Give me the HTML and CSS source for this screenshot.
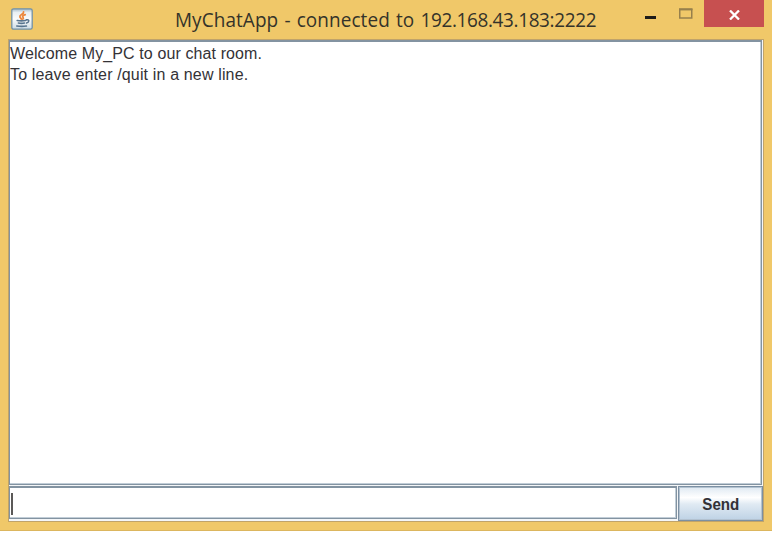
FILE: index.html
```html
<!DOCTYPE html>
<html lang="en">
<head>
<meta charset="utf-8">
<title>MyChatApp</title>
<link rel="stylesheet" href="styles.css">
</head>
<body>
<main class="window">
  <header class="titlebar">
    <svg class="app-icon" width="22" height="22" viewBox="0 0 22 22">
      <defs><linearGradient id="tile" x1="0" y1="0" x2="0" y2="1"><stop offset="0" stop-color="#a5bac8"/><stop offset=".18" stop-color="#e8eff3"/><stop offset=".5" stop-color="#fafbfa"/><stop offset="1" stop-color="#cbdbe5"/></linearGradient></defs>
      <rect x=".8" y=".8" width="20.4" height="20.4" rx="1.8" fill="url(#tile)" stroke="#7291a5" stroke-width="1.3"/>
      <g fill="none" stroke-linecap="round">
        <path d="M12.6 3.8c.4 2.6-4.5 3-3.7 5.1.3.9 1.3 1.3 1.4 2.3M14.2 6.7c-2.8 1-3 1.8-2.1 2.8.5.7.2 1.2-.3 1.6" stroke="#ec873b" stroke-width="1.8"/>
        <path d="M6.2 12.5c2 .4 6.3.4 8.2 0M7.4 15c2 .5 4.2.5 6 0M15.4 11.9c3.2-.8 3.1 2.4.2 3.1M5.8 18c3 .4 7 .4 9.6 0" stroke="#57748e" stroke-width="1.6"/>
      </g>
    </svg>
    <h1 class="title">MyChatApp - connected to <span class="address">192.168.43.183:2222</span></h1>
    <div class="controls">
      <svg class="minimize" width="12" height="3"><path d="M0 0h11v3H0z" fill="#1d1c19"/></svg>
      <svg class="maximize" width="14" height="11"><path d="M.75 1.5h12v8.5h-12z" fill="none" stroke="#97804c" stroke-width="1.5"/><path d="M0 1.25h13.5" stroke="#97804c" stroke-width="2"/></svg>
      <button class="close" aria-label="Close"><svg width="11" height="10"><path d="M1 .5l9 9M10 .5l-9 9" stroke="#fff" stroke-width="2.3"/></svg></button>
    </div>
  </header>
  <section class="client">
    <div class="messages"><p class="line first">Welcome My_PC to our chat room.</p><p class="line second">To leave enter /quit in a new line.</p></div>
    <div class="composer">
      <div class="entry"><span class="caret"></span></div>
      <button class="send"><span>Send</span></button>
    </div>
  </section>
</main>
</body>
</html>
```
FILE: styles.css
```css
* { box-sizing: border-box; }
body { margin: 0; background: #fff; font-family: "Liberation Sans", Arial, sans-serif; }
.window { width: 772px; height: 531px; background: #f0c869; border-bottom: 1px solid #dcb65e; }
.titlebar { height: 39px; display: flex; align-items: flex-start; }
.app-icon { margin: 8px 0 0 11px; flex: none; }
.title { margin: 6px 0 0 142px; width: 424px; flex: none; font: 400 20px/27px "Open Sans", sans-serif; letter-spacing: .1px; word-spacing: 1.2px; white-space: nowrap; color: #34332a; transform: scaleX(.946); transform-origin: left; }
.address { letter-spacing: -.36px; }
.controls { display: flex; flex: none; margin-left: 46px; }
.minimize { margin-top: 16px; }
.maximize { margin: 8px 0 0 22px; }
.close { width: 60px; height: 27px; padding: 2px 0 0 1px; margin-left: 11px; border: 0; background: #c75050; display: flex; align-items: center; justify-content: center; }
.client { width: 756px; height: 483px; margin-left: 8px; border: 1px solid #c0a369; background: #f4f6f8; }
.messages { width: 753px; height: 445px; background: #fff; border: solid #8393a1; border-width: 2px 1px 1px 1px; box-shadow: inset -1px -1px #c1cdd7; }
.line { margin: 0; height: 21px; font-size: 16px; line-height: 23px; color: #343236; white-space: nowrap; }
.first { letter-spacing: .11px; }
.second { letter-spacing: .15px; }
.composer { display: flex; height: 35px; margin-top: 1px; }
.entry { width: 668px; height: 33px; background: #fff; border: solid #8393a1; border-width: 2px 1px 1px 1px; box-shadow: inset -1px -1px #c1cdd7; padding: 5px 0 0 1px; }
.caret { display: block; width: 2px; height: 22px; background: #5b5958; }
.send { width: 85px; height: 35px; margin-left: 1px; padding: 2px 0 0; border: 1px solid #7c90a3; box-shadow: inset 0 0 0 1px #b3c2d0; background: linear-gradient(#dfe9f2 0%, #fff 32%, #e0eaf3 52%, #bed2e5 100%); color: #333137; font: bold 17px/20px "Liberation Sans", Arial, sans-serif; }
.send span { display: inline-block; transform: scaleX(.89); }
```
